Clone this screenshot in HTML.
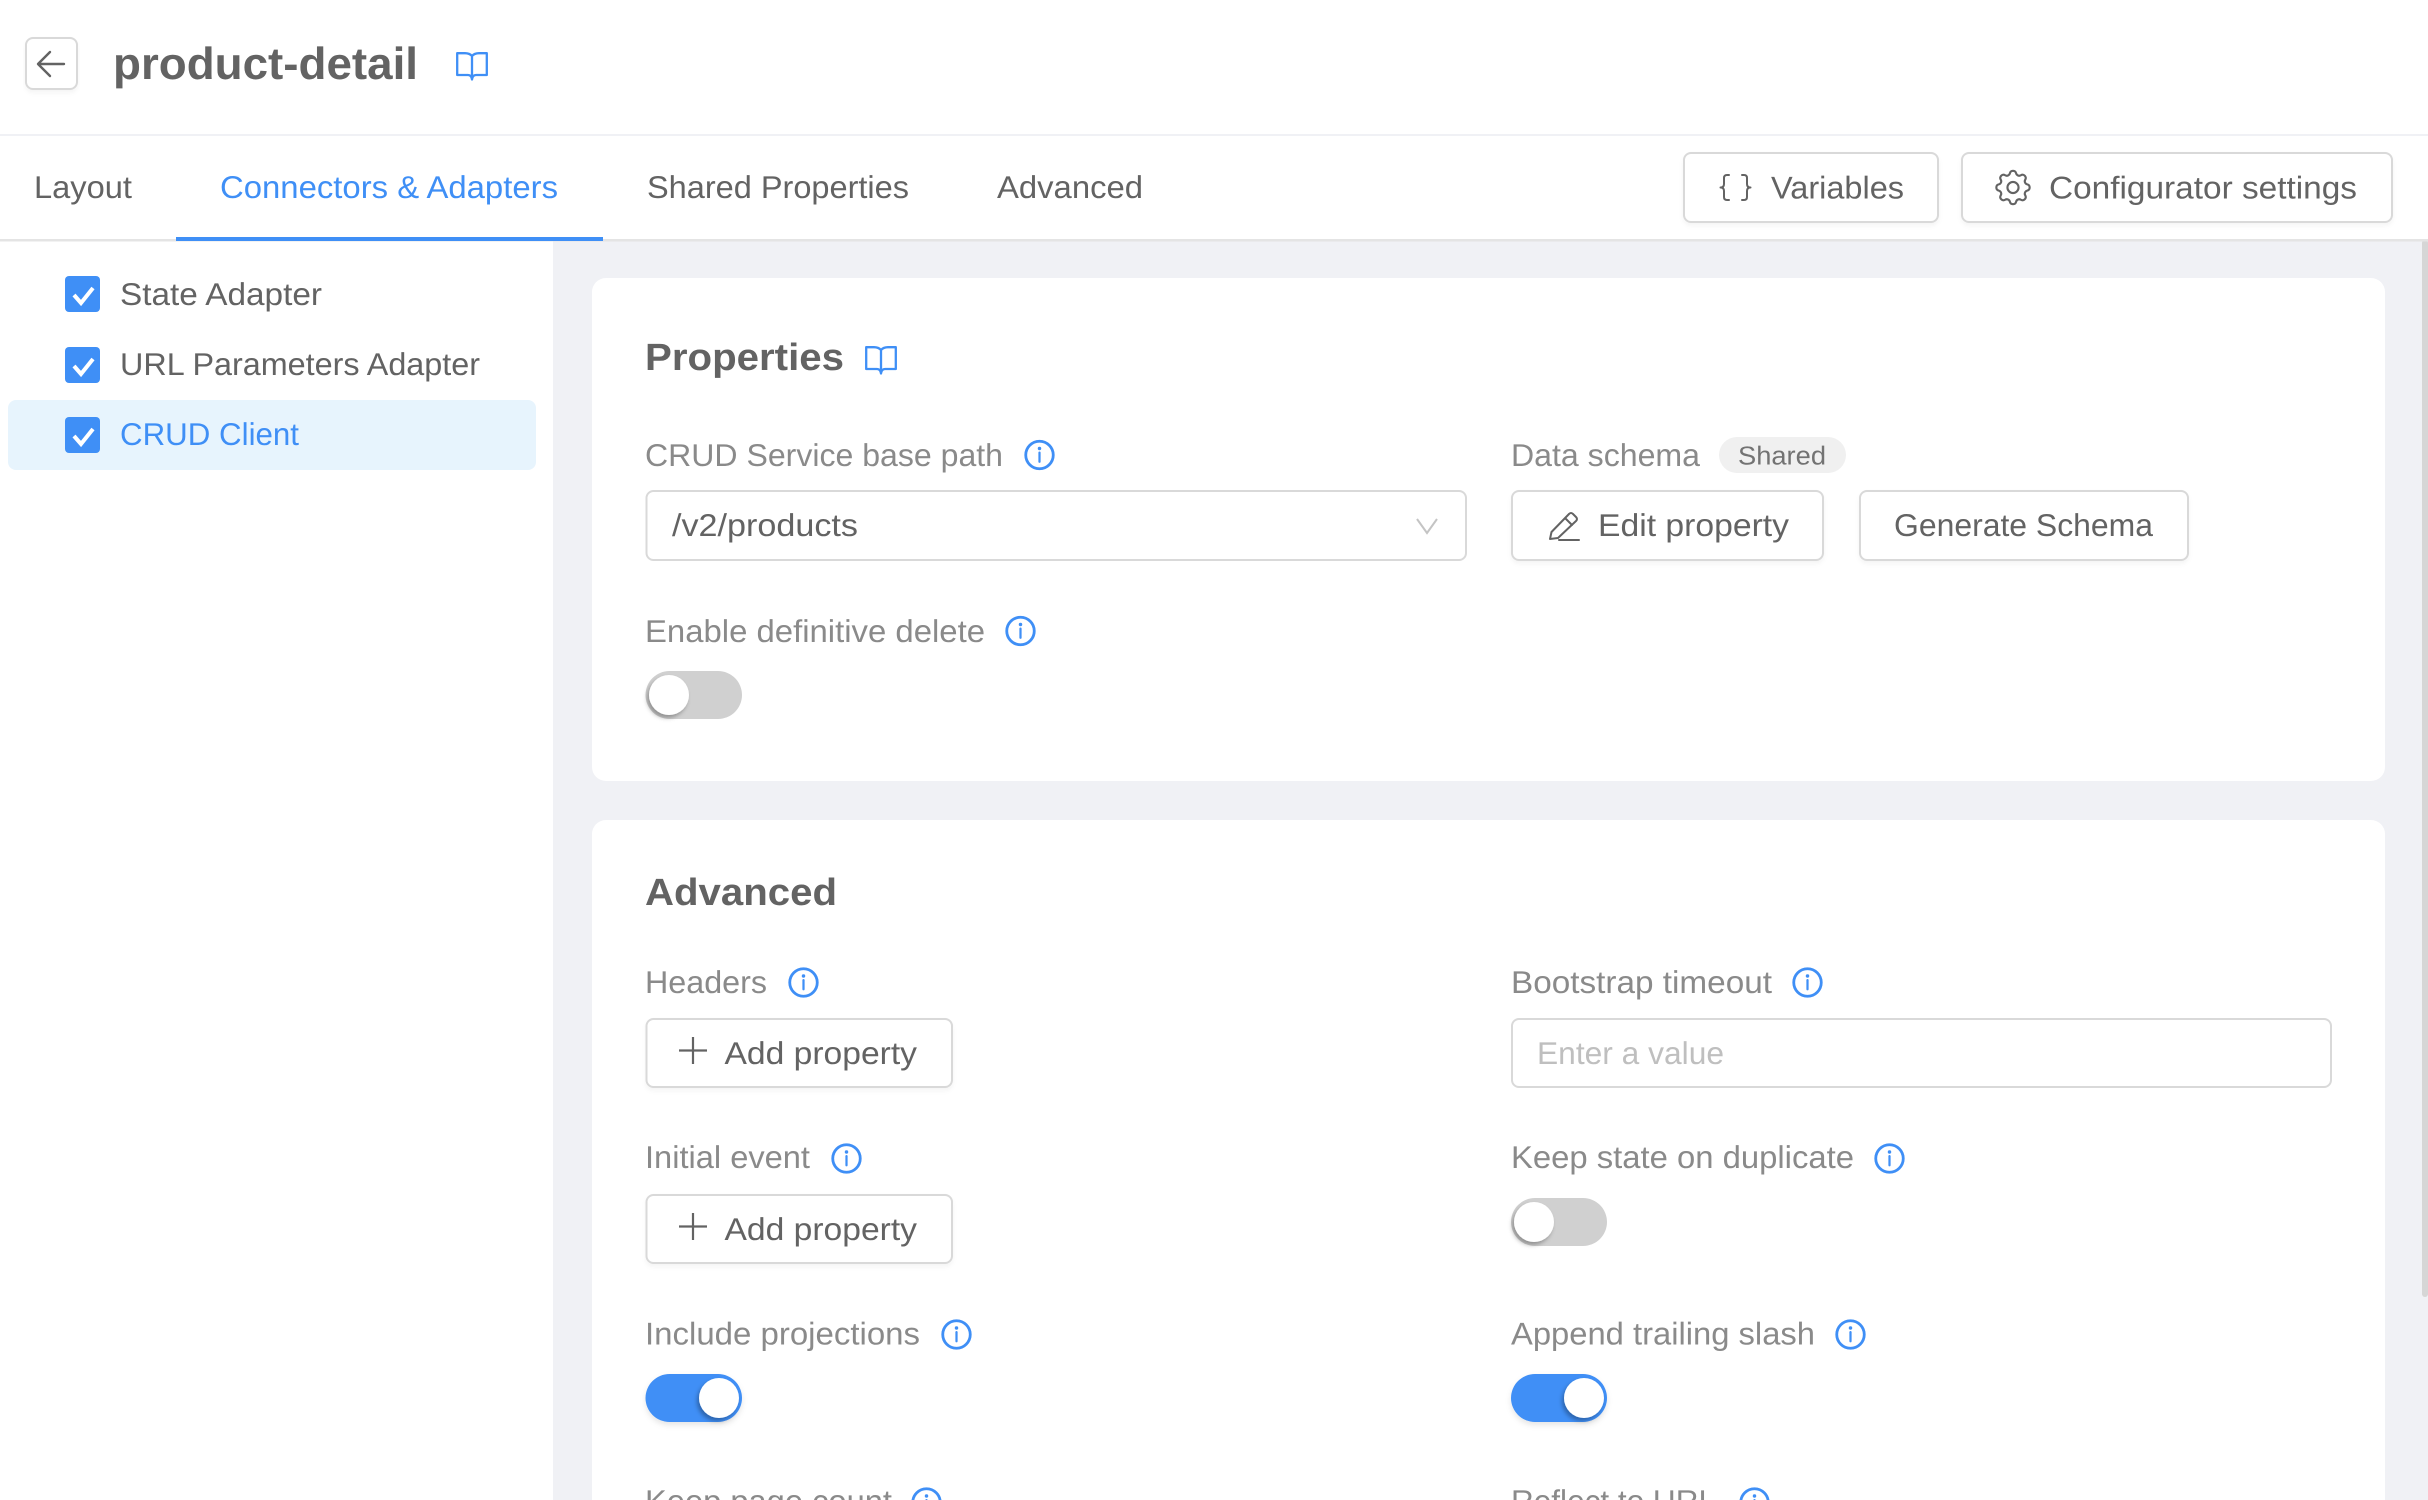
<!DOCTYPE html>
<html lang="en">
<head>
<meta charset="utf-8">
<title>product-detail</title>
<style>
html,body{margin:0;padding:0;background:#fff;width:2428px;height:1500px;overflow:hidden}
svg{display:block;position:absolute;left:0;top:0}
text{font-family:"Liberation Sans",Arial,sans-serif;font-size:31.5px;fill:#636363;text-rendering:geometricPrecision}
.l{fill:#8a8a8a}
.b{fill:#3f8ff6}
.h{font-weight:700;font-size:38px;fill:#636363}
.btn{fill:#fff;stroke:#d9d9d9;stroke-width:2;filter:url(#sh)}
.inp{fill:#fff;stroke:#d9d9d9;stroke-width:2}
.ic{fill:none;stroke:#636363;stroke-width:2;stroke-linecap:round;stroke-linejoin:round}
</style>
</head>
<body>
<svg width="2428" height="1500" viewBox="0 0 2428 1500" xmlns="http://www.w3.org/2000/svg">
<defs>
<filter id="sh" x="-5%" y="-10%" width="110%" height="130%"><feDropShadow dx="0" dy="3" stdDeviation="2" flood-color="#000" flood-opacity=".04"/></filter>
<filter id="ks" x="-40%" y="-40%" width="180%" height="180%"><feDropShadow dx="-2" dy="3" stdDeviation="2" flood-color="#000" flood-opacity=".3"/></filter>
<filter id="ts" x="-20%" y="-20%" width="140%" height="150%"><feDropShadow dx="0" dy="3" stdDeviation="3" flood-color="#000" flood-opacity=".1"/></filter>
<symbol id="info" viewBox="0 0 32 32" overflow="visible">
<circle cx="16" cy="16" r="14.2" fill="none" stroke="#3f8ff6" stroke-width="2.9"/>
<circle cx="16" cy="9.3" r="1.8" fill="#3f8ff6"/>
<path d="M16 13.500V23" stroke="#3f8ff6" stroke-width="2.300" fill="none" stroke-linecap="round"/>
</symbol>
<symbol id="book" viewBox="0 0 32 28" overflow="visible">
<path d="M16 4C14 1.800 12 1.200 9 1.200H1.200V23H12C14 23 15.600 24 16 27.500C16.400 24 18 23 20 23H30.800V1.200H23C20 1.200 18 1.800 16 4ZM16 4V27" fill="none" stroke="#3f8ff6" stroke-width="2.300" stroke-linejoin="round"/>
</symbol>
<symbol id="cb" viewBox="0 0 35 36" overflow="visible">
<rect width="35" height="36" rx="4" fill="#3f8ff6"/>
<path d="M9 19L16 27L28 12" fill="none" stroke="#fff" stroke-width="4"/>
</symbol>
</defs>

<!-- backgrounds -->
<rect x="553" y="240" width="1875" height="1260" fill="#f0f1f5"/>
<rect x="2422" y="240" width="6" height="1057" rx="3" fill="#d6d6d6"/>
<rect x="0" y="134" width="2428" height="2" fill="#f0f1f5"/>
<rect x="0" y="239" width="2428" height="2.500" fill="#e4e4e4"/>
<rect x="176" y="237" width="427" height="4" fill="#3f8ff6"/>

<!-- header -->
<rect class="btn" x="26" y="38" width="51" height="51" rx="7"/>
<path d="M64 64H39M50 52L38 64L50 76" fill="none" stroke="#636363" stroke-width="2.400" stroke-linejoin="round" stroke-linecap="round"/>
<text x="113" y="79" style="font-size:45px;font-weight:700" textLength="305" lengthAdjust="spacingAndGlyphs">product-detail</text>
<use href="#book" x="456" y="52" width="32" height="28"/>

<!-- tabs -->
<text x="34" y="198" textLength="98" lengthAdjust="spacingAndGlyphs">Layout</text>
<text x="220" y="198" class="b" textLength="338" lengthAdjust="spacingAndGlyphs">Connectors &amp; Adapters</text>
<text x="647" y="198" textLength="262" lengthAdjust="spacingAndGlyphs">Shared Properties</text>
<text x="997" y="198" textLength="146" lengthAdjust="spacingAndGlyphs">Advanced</text>

<rect class="btn" x="1684" y="153" width="254" height="69" rx="7"/>
<path class="ic" d="M1729 175h-2q-3 0-3 3v6q0 3.500-3.500 3.500q3.500 0 3.500 3.500v6q0 3 3 3h2M1742 175h2q3 0 3 3v6q0 3.500 3.500 3.500q-3.500 0-3.500 3.500v6q0 3-3 3h-2"/>
<text x="1771" y="198.500" textLength="133" lengthAdjust="spacingAndGlyphs">Variables</text>
<rect class="btn" x="1962" y="153" width="430" height="69" rx="7"/>
<g transform="translate(1990.800 165.300) scale(1.850)" fill="none" stroke="#636363" stroke-width="1.150" stroke-linejoin="round">
<path d="M10.325 4.317c.426 -1.756 2.924 -1.756 3.350 0a1.724 1.724 0 0 0 2.573 1.066c1.543 -.94 3.310 .826 2.370 2.370a1.724 1.724 0 0 0 1.065 2.572c1.756 .426 1.756 2.924 0 3.350a1.724 1.724 0 0 0 -1.066 2.573c.94 1.543 -.826 3.310 -2.370 2.370a1.724 1.724 0 0 0 -2.572 1.065c-.426 1.756 -2.924 1.756 -3.350 0a1.724 1.724 0 0 0 -2.573 -1.066c-1.543 .94 -3.310 -.826 -2.370 -2.370a1.724 1.724 0 0 0 -1.065 -2.572c-1.756 -.426 -1.756 -2.924 0 -3.350a1.724 1.724 0 0 0 1.066 -2.573c-.94 -1.543 .826 -3.310 2.370 -2.370c1 .608 2.296 .07 2.572 -1.065z"/>
<circle cx="12" cy="12" r="3"/>
</g>
<text x="2049" y="198.500" textLength="308" lengthAdjust="spacingAndGlyphs">Configurator settings</text>

<!-- sidebar -->
<rect x="8" y="400" width="528" height="70" rx="8" fill="#e7f4fd"/>
<use href="#cb" x="65" y="276" width="35" height="36"/>
<text x="120" y="305" textLength="202" lengthAdjust="spacingAndGlyphs">State Adapter</text>
<use href="#cb" x="65" y="347" width="35" height="36"/>
<text x="120" y="375" textLength="360" lengthAdjust="spacingAndGlyphs">URL Parameters Adapter</text>
<use href="#cb" x="65" y="417" width="35" height="36"/>
<text x="120" y="445" class="b" textLength="179" lengthAdjust="spacingAndGlyphs">CRUD Client</text>

<!-- card 1 -->
<rect x="592" y="278" width="1793" height="503" rx="14" fill="#fff"/>
<text x="645" y="370" class="h" textLength="199" lengthAdjust="spacingAndGlyphs">Properties</text>
<use href="#book" x="865" y="346" width="32" height="28"/>

<text x="645" y="466" class="l" textLength="358" lengthAdjust="spacingAndGlyphs">CRUD Service base path</text>
<use href="#info" x="1024" y="439" width="31" height="32"/>
<rect class="inp" x="646.500" y="491" width="819.500" height="69" rx="7"/>
<text x="672" y="536" textLength="186" lengthAdjust="spacingAndGlyphs">/v2/products</text>
<path d="M1417 519L1427 533L1437 519" fill="none" stroke="#c4c4c4" stroke-width="2"/>

<text x="1511" y="466" class="l" textLength="189" lengthAdjust="spacingAndGlyphs">Data schema</text>
<rect x="1719" y="437" width="127" height="36" rx="18" fill="#f0f0f0"/>
<text x="1738" y="464.500" style="font-size:26px;fill:#737373" textLength="88" lengthAdjust="spacingAndGlyphs">Shared</text>
<rect class="btn" x="1512" y="491" width="311" height="69" rx="7"/>
<path class="ic" d="M1550 539L1551.500 532L1569 514Q1571 512 1573 514L1576 517Q1578 519 1576 521L1558 538ZM1565 518L1572 525M1559 540H1579"/>
<text x="1598" y="536" textLength="191" lengthAdjust="spacingAndGlyphs">Edit property</text>
<rect class="btn" x="1860" y="491" width="328" height="69" rx="7"/>
<text x="1894" y="536" textLength="259" lengthAdjust="spacingAndGlyphs">Generate Schema</text>

<text x="645" y="642" class="l" textLength="340" lengthAdjust="spacingAndGlyphs">Enable definitive delete</text>
<use href="#info" x="1005" y="615" width="31" height="32"/>
<rect x="645.500" y="671" width="96.500" height="48" rx="24" fill="#d0d0d0"/>
<ellipse cx="669" cy="695" rx="20" ry="20" fill="#fff" filter="url(#ks)"/>

<!-- card 2 -->
<rect x="592" y="820" width="1793" height="700" rx="14" fill="#fff"/>
<text x="645" y="905" class="h" textLength="192" lengthAdjust="spacingAndGlyphs">Advanced</text>

<text x="645" y="993" class="l" textLength="122" lengthAdjust="spacingAndGlyphs">Headers</text>
<use href="#info" x="788" y="967" width="31" height="31"/>
<rect class="btn" x="646.500" y="1019" width="305.500" height="68" rx="7"/>
<path d="M693 1037V1064M679 1050.500H707" fill="none" stroke="#636363" stroke-width="2.200"/>
<text x="724.500" y="1064" textLength="192.500" lengthAdjust="spacingAndGlyphs">Add property</text>

<text x="1511" y="993" class="l" textLength="261" lengthAdjust="spacingAndGlyphs">Bootstrap timeout</text>
<use href="#info" x="1792" y="967" width="31" height="31"/>
<rect class="inp" x="1512" y="1019" width="819" height="68" rx="7"/>
<text x="1537" y="1064" style="fill:#bfbfbf" textLength="187" lengthAdjust="spacingAndGlyphs">Enter a value</text>

<text x="645" y="1168" class="l" textLength="165" lengthAdjust="spacingAndGlyphs">Initial event</text>
<use href="#info" x="831" y="1143" width="31" height="31"/>
<rect class="btn" x="646.500" y="1195" width="305.500" height="68" rx="7"/>
<path d="M693 1213V1240M679 1226.500H707" fill="none" stroke="#636363" stroke-width="2.200"/>
<text x="724.500" y="1240" textLength="192.500" lengthAdjust="spacingAndGlyphs">Add property</text>

<text x="1511" y="1168" class="l" textLength="343" lengthAdjust="spacingAndGlyphs">Keep state on duplicate</text>
<use href="#info" x="1874" y="1143" width="31" height="31"/>
<rect x="1511" y="1198" width="96" height="48" rx="24" fill="#d0d0d0"/>
<ellipse cx="1534" cy="1222" rx="20" ry="20" fill="#fff" filter="url(#ks)"/>

<text x="645" y="1344.500" class="l" textLength="275" lengthAdjust="spacingAndGlyphs">Include projections</text>
<use href="#info" x="941" y="1319" width="31" height="31"/>
<rect x="645.500" y="1374" width="96.500" height="48" rx="24" fill="#3f8ff6" filter="url(#ts)"/>
<ellipse cx="719" cy="1398" rx="20" ry="20" fill="#fff" filter="url(#ks)"/>

<text x="1511" y="1344.500" class="l" textLength="304" lengthAdjust="spacingAndGlyphs">Append trailing slash</text>
<use href="#info" x="1835" y="1319" width="31" height="31"/>
<rect x="1511" y="1374" width="96" height="48" rx="24" fill="#3f8ff6" filter="url(#ts)"/>
<ellipse cx="1584" cy="1398" rx="20" ry="20" fill="#fff" filter="url(#ks)"/>

<text x="645" y="1512" class="l" textLength="247" lengthAdjust="spacingAndGlyphs">Keep page count</text>
<use href="#info" x="911" y="1487" width="31" height="31"/>
<text x="1511" y="1512" class="l" textLength="205" lengthAdjust="spacingAndGlyphs">Reflect to URL</text>
<use href="#info" x="1739" y="1487" width="31" height="31"/>
</svg>
</body>
</html>
